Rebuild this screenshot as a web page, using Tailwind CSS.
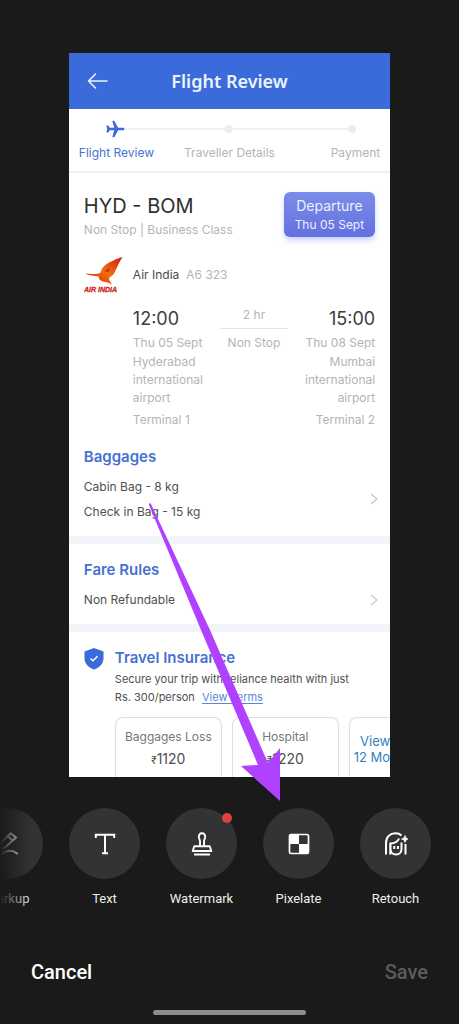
<!DOCTYPE html>
<html lang="en">
<head>
<meta charset="utf-8">
<meta name="viewport" content="width=device-width, initial-scale=1">
<title>Photo editor</title>
<script src="https://cdn.jsdelivr.net/npm/@tailwindcss/browser@4"></script>
</head>
<body class="flex min-h-screen flex-col overflow-x-hidden bg-[#1a1a1a] font-['Roboto',sans-serif]">
<main class="relative mx-[15%] mt-[53px] font-['Inter',sans-serif]">
  <article class="overflow-hidden bg-white text-xs text-[#b4b4b4]">
    <header class="grid h-14 grid-cols-[24px_1fr_24px] items-center bg-[#3b6bdb] px-[17px] text-[#eaf3ff]">
      <button type="button" aria-label="Back">
        <svg class="h-5 w-6" viewBox="0 0 24 20" fill="none" stroke="currentColor" stroke-width="1.6" stroke-linecap="round" stroke-linejoin="round"><path d="M21 10H2.500M9.500 3L2.500 10l7 7"/></svg>
      </button>
      <h1 class="text-center font-['Noto_Sans',sans-serif] text-lg font-semibold">Flight Review</h1>
    </header>

    <nav class="h-16 border-b-2 border-[#f0f0f0] px-[10px] pt-[10px]" aria-label="Booking steps">
      <div class="grid h-5 grid-cols-[20px_100fr_8px_115fr_8px] items-center pr-6 pl-[26px]">
        <svg class="h-5 w-5 text-[#3b6bdb]" viewBox="0 0 20 20" fill="currentColor"><path d="M19.500 10c0 .8-.8 1.300-1.700 1.300h-4.600L9.300 18.300H7.300l1.900-7H4.800L3.300 13.500H1.300L2.200 10l-.9-3.500h2L4.800 8.700h4.400l-1.900-7h2l3.900 7h4.600c.9 0 1.700.5 1.700 1.300z"/></svg>
        <span class="h-[2px] bg-[#f1f1f1]"></span>
        <span class="h-2 w-2 rounded-full bg-[#ececec]"></span>
        <span class="h-[2px] bg-[#f1f1f1]"></span>
        <span class="h-2 w-2 rounded-full bg-[#ececec]"></span>
      </div>
      <div class="mt-1 grid grid-cols-[1fr_auto_1fr] leading-5">
        <span class="text-[#4672cf]">Flight Review</span><span>Traveller Details</span><span class="text-right">Payment</span>
      </div>
    </nav>

    <section class="px-[15px] pt-[19px]">
      <div class="flex items-start justify-between">
        <div>
          <h2 class="text-xl leading-7 text-[#303030]">HYD - BOM</h2>
          <p class="leading-5">Non Stop | Business Class</p>
        </div>
        <button type="button" class="flex h-[45px] flex-col items-center justify-center rounded-md bg-linear-to-b from-[#7b8de9] to-[#6470de] px-[11px] text-[#eaf0ff] shadow-md shadow-indigo-200">
          <span class="text-sm leading-5">Departure</span>
          <span class="leading-[18px]">Thu 05 Sept</span>
        </button>
      </div>
      <div class="mt-[17px] flex h-9 items-center">
        <svg class="h-9 w-[39px]" viewBox="0 0 39 36" role="img" aria-label="Air India">
          <defs><linearGradient id="wing" x1="0" y1="1" x2="1" y2="0"><stop offset="0" stop-color="#c91414"/><stop offset=".5" stop-color="#f0700f"/><stop offset="1" stop-color="#d51710"/></linearGradient></defs>
          <path fill="url(#wing)" d="M38.500 0C32 2 22 6 18.500 11c-1.500 2-1.500 4-2.500 5-4 1.500-10 1-15 .5 4 2 9 2.500 13.500 3 .5 2 1 4 4.500 5 3 .8 6.500 1 9 3.500-1-3-4-5.500-2.500-7.500C27 19 29 18.500 30 16.500 33 11 35 5 38.500 0z"/>
          <path d="M21 14.500l4-2.500-1.500 3" fill="none" stroke="#a81f0c" stroke-width="1"/>
          <text x="0" y="35" font-family="Liberation Sans" font-size="7" font-weight="700" font-style="italic" fill="#d21f1f" stroke="#d21f1f" stroke-width=".3">AIR INDIA</text>
        </svg>
        <span class="ml-[10px] text-[#4b4b4b]">Air India</span>
        <span class="ml-[7px]">A6 323</span>
      </div>
      <div class="mt-3 flex justify-between pl-[49px]">
        <div class="w-[76px] leading-[18px]">
          <p class="text-lg leading-7 text-[#3c3c3c]">12:00</p>
          <p class="leading-5">Thu 05 Sept</p>
          <p>Hyderabad international airport</p>
          <p class="mt-1">Terminal 1</p>
        </div>
        <div class="w-[68px] text-center leading-5">
          <p class="border-b border-[#e4e4e4] pb-[3px]">2 hr</p>
          <p class="mt-1 whitespace-nowrap">Non Stop</p>
        </div>
        <div class="w-[76px] text-right leading-[18px]">
          <p class="text-lg leading-7 text-[#3c3c3c]">15:00</p>
          <p class="leading-5">Thu 08 Sept</p>
          <p>Mumbai international airport</p>
          <p class="mt-1">Terminal 2</p>
        </div>
      </div>
    </section>

    <section class="flex items-end justify-between border-b-8 border-[#f1f5f9] pt-[18px] pr-3 pb-3 pl-[15px] text-[#505050]">
      <div>
        <h2 class="text-[15px] leading-5 font-semibold text-[#4672cf]">Baggages</h2>
        <p class="mt-[7px] leading-[25px]">Cabin Bag - 8 kg</p>
        <p class="leading-[25px]">Check in Bag - 15 kg</p>
      </div>
      <button type="button" aria-label="Baggage details" class="mb-[19px]"><svg class="h-3 w-2" viewBox="0 0 8 12" fill="none" stroke="#c6c6c6" stroke-width="1.2"><path d="M1 1l6 5-6 5"/></svg></button>
    </section>

    <section class="flex items-end justify-between border-b-8 border-[#f1f5f9] pt-4 pr-3 pb-3 pl-[15px] text-[#505050]">
      <div>
        <h2 class="text-[15px] leading-5 font-semibold text-[#4672cf]">Fare Rules</h2>
        <p class="mt-[7px] leading-[25px]">Non Refundable</p>
      </div>
      <button type="button" aria-label="Fare details" class="mb-[6px]"><svg class="h-3 w-2" viewBox="0 0 8 12" fill="none" stroke="#c6c6c6" stroke-width="1.2"><path d="M1 1l6 5-6 5"/></svg></button>
    </section>

    <section class="flex pt-4 pl-[15px] text-[#505050]">
      <svg class="h-[22px] w-5 shrink-0" viewBox="0 0 20 22"><path fill="#3b6bdb" d="M10 0l9.500 3.500v7c0 5-4 9-9.500 11-5.500-2-9.500-6-9.500-11v-7z"/><path d="M6.500 10.500l2.500 2.300 4.500-4.500" fill="none" stroke="#fff" stroke-width="1.500"/></svg>
      <div class="ml-[11px] min-w-0 flex-1">
        <h2 class="text-[15px] leading-5 font-semibold text-[#4672cf]">Travel Insurance</h2>
        <p class="mt-[2px] text-[11px] leading-[18px] whitespace-nowrap">Secure your trip with reliance health with just<br>Rs. 300/person <a href="#terms" class="ml-1 text-[#5c85da] underline underline-offset-2">View Terms</a></p>
        <div class="mt-[11px] flex h-[60px] gap-[10px] text-center leading-5">
          <div class="w-[107px] shrink-0 rounded-t-lg border border-b-0 border-[#dedede] pt-[9px]"><p class="text-[#777]">Baggages Loss</p><p class="mt-[2px] text-sm leading-5"><span class="text-[10px]">₹</span>1120</p></div>
          <div class="w-[107px] shrink-0 rounded-t-lg border border-b-0 border-[#dedede] pt-[9px]"><p class="text-[#777]">Hospital</p><p class="mt-[2px] text-sm leading-5"><span class="text-[10px]">₹</span>1220</p></div>
          <a href="#more" class="min-w-0 flex-1 rounded-tl-lg border-t border-l border-[#dedede] pt-[15px] text-right text-[13px] leading-4 whitespace-nowrap text-[#3182bd]">View<br>12 Mo</a>
        </div>
      </div>
    </section>
  </article>
  <!-- Pointer drawn over the photo, leading to the Pixelate tool -->
  <svg class="pointer-events-none absolute top-[450px] left-20 z-10 h-[298px] w-[131px]" viewBox="0 0 131 298" fill="#b041ff"><path d="M0 0L2 1 61 127 119 260 131 245V298L92 263 109 262 52 127 0 2z"/></svg>
</main>

<nav aria-label="Tools" class="relative mt-[31px] flex justify-end overflow-hidden pr-[15px] text-[13px] leading-5 text-[#eee]">
  <button type="button" class="flex w-[97px] shrink-0 flex-col items-center gap-[10px]">
    <span class="flex h-[71px] w-[71px] items-center justify-center rounded-full bg-[#333]"><svg class="h-6 w-6" viewBox="0 0 24 24" fill="none" stroke="#fff" stroke-width="2" stroke-linejoin="round" stroke-linecap="round"><path d="M3 17l1.500-6L14.500 1.200l5.500 4.300L9 15.500zM11.500 4l5 4.500M5 22.500c5-4 11-5 16-1"/></svg></span>Markup
  </button>
  <button type="button" class="flex w-[97px] shrink-0 flex-col items-center gap-[10px]">
    <span class="flex h-[71px] w-[71px] items-center justify-center rounded-full bg-[#333]"><svg class="h-6 w-6" viewBox="0 0 24 24" fill="none" stroke="#fff" stroke-width="2"><path d="M2.800 6V2.800h18.400V6M12 2.800V21M9 21.200h6"/></svg></span>Text
  </button>
  <button type="button" class="flex w-[97px] shrink-0 flex-col items-center gap-[10px]">
    <span class="relative flex h-[71px] w-[71px] items-center justify-center rounded-full bg-[#333]"><svg class="h-6 w-6" viewBox="0 0 24 24" fill="none" stroke="#fff" stroke-width="1.900"><path d="M10 14V9L8.900 5.500C8.500 2.500 10 1.300 12 1.300s3.500 1.200 3.100 4.200L14 9v5M4.300 14.200h15.400l1.600 4.800H2.700zM4 22.500h16" stroke-linejoin="round"/></svg><i class="absolute top-[5px] right-[5px] h-[10px] w-[10px] rounded-full bg-[#e0413e]"></i></span>Watermark
  </button>
  <button type="button" class="flex w-[97px] shrink-0 flex-col items-center gap-[10px]">
    <span class="flex h-[71px] w-[71px] items-center justify-center rounded-full bg-[#333]"><svg class="h-6 w-6" viewBox="0 0 24 24"><rect x="2.500" y="2.500" width="19" height="19" rx="1.500" fill="none" stroke="#fff" stroke-width="1.700"/><path d="M3 3h9v9H3zM12 12h9v9h-9z" fill="#fff"/></svg></span>Pixelate
  </button>
  <button type="button" class="flex w-[97px] shrink-0 flex-col items-center gap-[10px]">
    <span class="flex h-[71px] w-[71px] items-center justify-center rounded-full bg-[#333]"><svg class="h-6 w-6" viewBox="0 0 24 24" fill="none" stroke="#fff" stroke-width="2"><path d="M2 22.500V11C2 5 6 1.300 11.500 1.300c2.500 0 4.500.8 6 2.200M6.300 22.500V11.500c5-.3 7.500-1.500 8.700-5M6.500 11.500v5.500c0 3 2 5.500 5.500 5.500s5.500-2.500 5.500-5.500v-6.500M21.500 12v10.500M10.300 14v3M14 14v3"/><path d="M21 3.500l1 2.500 2 1-2 1-1 2.500-1-2.500-2.500-1 2.500-1z" fill="#fff" stroke="#fff" stroke-width=".7"/></svg></span>Retouch
  </button>
  <div class="pointer-events-none absolute inset-y-0 left-0 w-8 bg-linear-to-r from-[#1a1a1a] to-transparent"></div>
</nav>

<footer class="mt-auto pb-[9px]">
  <div class="flex justify-between px-[31px] text-xl leading-7 font-medium">
    <button type="button" class="text-white">Cancel</button>
    <button type="button" class="text-[#5c5c5c]" disabled>Save</button>
  </div>
  <div class="mx-auto mt-6 h-[5px] w-1/3 rounded-full bg-[#8e8e8e]"></div>
</footer>
</body>
</html>
